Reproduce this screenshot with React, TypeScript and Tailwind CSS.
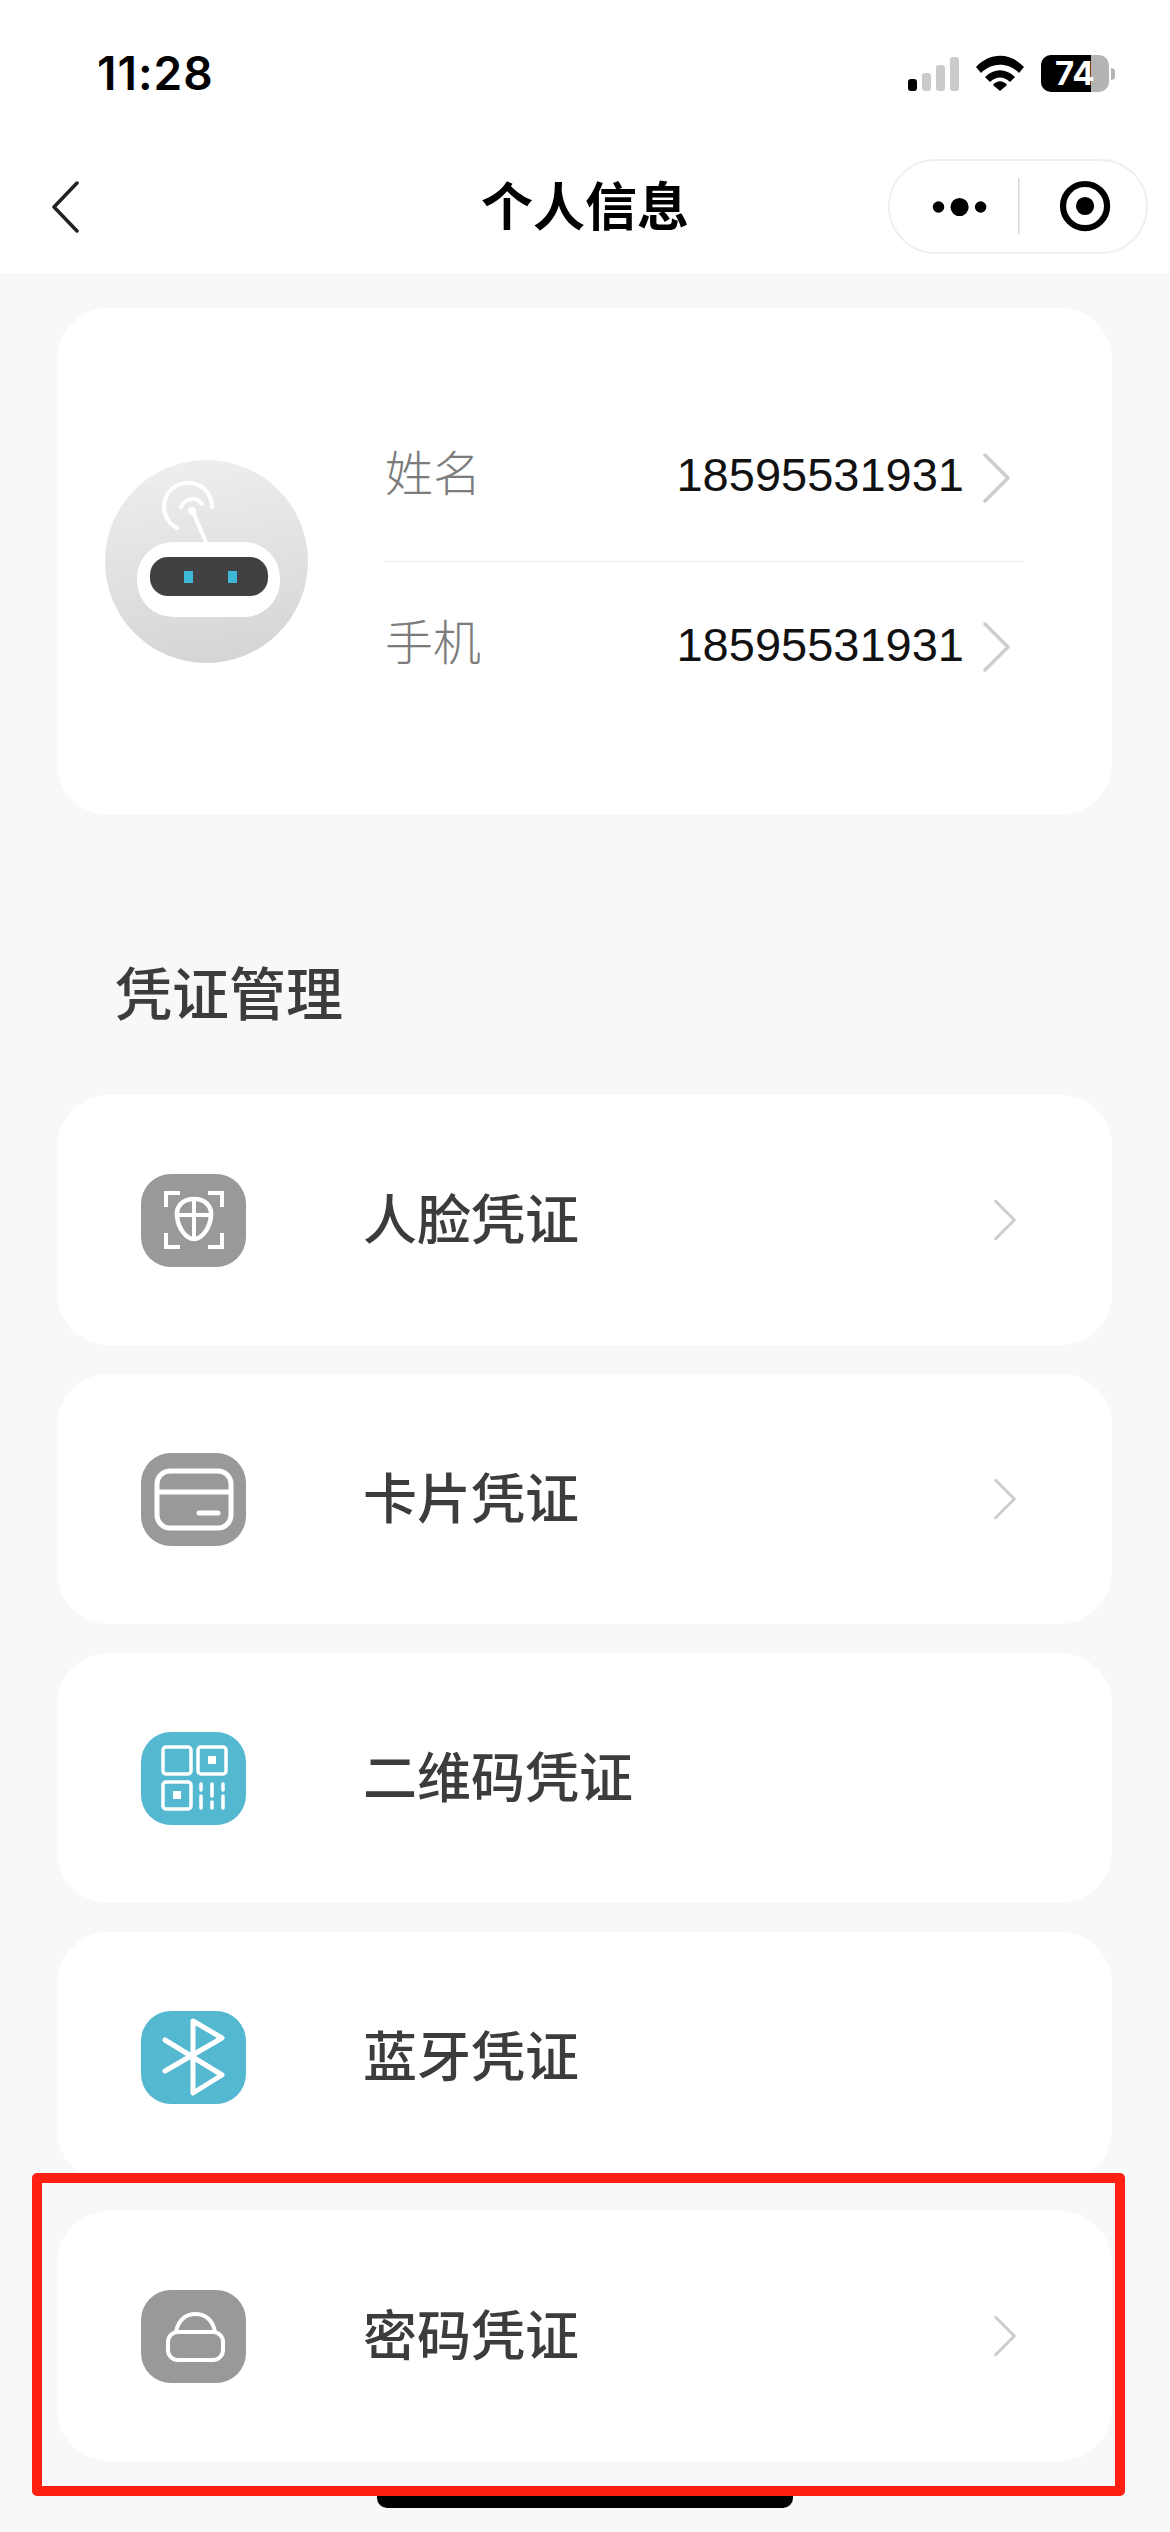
function Chevron({ className }: { className: string }) {
  return (
    <svg viewBox="0 0 27 50" fill="none" className={className}>
      <path d="M2 2 L25 25 L2 48" stroke="#cdcdcd" strokeWidth="3.5" strokeLinecap="round" strokeLinejoin="round" />
    </svg>
  );
}

function Tile({ color, children }: { color: string; children: React.ReactNode }) {
  return (
    <div className={`w-[105px] h-[93px] rounded-[30px] shrink-0 ${color}`}>
      <svg viewBox="0 0 105 93" fill="none" stroke="#fff" className="w-full h-full">
        {children}
      </svg>
    </div>
  );
}

function FaceIcon() {
  return (
    <Tile color="bg-[#999999]">
      <g strokeWidth="4">
        <path d="M39 19 H25 V33 M67 19 H81 V33 M25 59 V73 H39 M81 59 V73 H67" />
        <path d="M53 25 C65 25 71 33 70 42 C69 54 61 65 53 65 C45 65 37 54 36 42 C35 33 41 25 53 25 Z" strokeWidth="4.5" />
        <path d="M53 25 V65 M37 41 H69" />
      </g>
    </Tile>
  );
}

function CardIcon() {
  return (
    <Tile color="bg-[#999999]">
      <rect x="16" y="18" width="74" height="57" rx="13" strokeWidth="5" />
      <path d="M16 39 H90" strokeWidth="5" />
      <path d="M58 60 H77" strokeWidth="5" strokeLinecap="round" />
    </Tile>
  );
}

function QrIcon() {
  return (
    <Tile color="bg-[#54b8d1]">
      <g strokeWidth="3.5">
        <rect x="22" y="15" width="28" height="27" rx="3" />
        <rect x="57" y="15" width="28" height="27" rx="3" />
        <rect x="22" y="50" width="28" height="27" rx="3" />
      </g>
      <rect x="67" y="24" width="8" height="8" fill="#fff" stroke="none" />
      <rect x="32" y="59" width="8" height="8" fill="#fff" stroke="none" />
      <path d="M60 52 V58 M60 64 V76 M71 52 V64 M71 70 V76 M82 52 V58 M82 64 V76" strokeWidth="3.5" strokeLinecap="round" />
    </Tile>
  );
}

function BluetoothIcon() {
  return (
    <Tile color="bg-[#54b8d1]">
      <path d="M24 29 L81 64 L52 82 V10 L81 27 L24 60" strokeWidth="5" strokeLinecap="round" strokeLinejoin="round" />
    </Tile>
  );
}

function LockIcon() {
  return (
    <Tile color="bg-[#999999]">
      <rect x="27" y="42" width="55" height="28" rx="10" strokeWidth="4" />
      <path d="M35 42 C37 30 45 24 54.5 24 C64 24 72 30 74 42" strokeWidth="4" />
    </Tile>
  );
}

function Avatar() {
  return (
    <svg viewBox="0 0 203 203" className="w-[203px] h-[203px] shrink-0 mt-[152px]">
      <defs>
        <linearGradient id="avatarBg" x1="0.4" y1="0" x2="0.55" y2="1">
          <stop offset="0" stopColor="#eeeeee" />
          <stop offset="1" stopColor="#d4d5d5" />
        </linearGradient>
      </defs>
      <circle cx="101.5" cy="101.5" r="101.5" fill="url(#avatarBg)" />
      <path d="M88 52 L101 82" stroke="#fff" strokeWidth="4" strokeLinecap="round" />
      <circle cx="87" cy="51" r="4" fill="#fff" />
      <path d="M72 68 A24 24 0 1 1 107 47" stroke="#fff" strokeWidth="4" fill="none" strokeLinecap="round" />
      <path d="M76 47 A12 12 0 0 1 97 44" stroke="#fff" strokeWidth="4" fill="none" strokeLinecap="round" />
      <rect x="32" y="82" width="143" height="75" rx="36" fill="#fff" />
      <rect x="45" y="97" width="118" height="39" rx="18" fill="#414143" />
      <rect x="79" y="111" width="9" height="12" fill="#3fb8d8" />
      <rect x="123" y="111" width="9" height="12" fill="#3fb8d8" />
    </svg>
  );
}

function InfoRow({ label, value, className }: { label: string; value: string; className: string }) {
  return (
    <div className={`flex items-center justify-between pl-[1px] pr-[16px] ${className}`}>
      <span className="text-[48px] leading-none font-light text-[#7c7c7c]">{label}</span>
      <div className="flex items-center gap-[19px]">
        <span className="text-[47px] leading-none text-[#111111]">{value}</span>
        <Chevron className="w-[27px] h-[50px] mt-[6px]" />
      </div>
    </div>
  );
}

function CredentialCard({ icon, title, arrow }: { icon: React.ReactNode; title: string; arrow?: boolean }) {
  return (
    <div className="h-[250px] rounded-[52px] bg-white flex items-center pl-[84px] pr-[96px]">
      {icon}
      <span className="ml-[117px] mt-[2px] flex-1 text-[54px] leading-none font-medium text-[#3c3c3c]">{title}</span>
      {arrow && <Chevron className="w-[22px] h-[48px]" />}
    </div>
  );
}

export default function App() {
  return (
    <div className="relative w-[1170px] h-[2532px] overflow-hidden bg-[#f6f8fa] font-['Liberation_Sans','Noto_Sans_CJK_SC',sans-serif]">
      <header className="h-[273px] bg-white">
        <div className="h-[159px] flex items-start justify-between pt-[50px] pl-[97px] pr-[55px]">
          <span className="font-['Inter',sans-serif] text-[46px] leading-[46px] font-semibold text-black tracking-[1px]">11:28</span>
          <div className="flex items-start gap-[17px] pt-[5px]">
            <svg viewBox="0 0 51 34" className="w-[51px] h-[34px] mt-[2px]">
              <rect x="0" y="22" width="9" height="12" rx="3" fill="#000" />
              <rect x="14" y="16" width="9" height="18" rx="3" fill="#cbcbcb" />
              <rect x="28" y="8" width="9" height="26" rx="3" fill="#cbcbcb" />
              <rect x="42" y="0" width="9" height="34" rx="3" fill="#cbcbcb" />
            </svg>
            <svg viewBox="0 0 48 36" className="w-[48px] h-[36px]">
              <path d="M0 12 C14 -3 34 -3 48 12 L43 18 C32 7 16 7 5 18 Z" fill="#000" />
              <path d="M9 22 C18 13 30 13 39 22 L34 27 C28 21 20 21 14 27 Z" fill="#000" />
              <path d="M17 30 C21 25 27 25 31 30 L24 36 Z" fill="#000" />
            </svg>
            <div className="flex items-center gap-[2px]">
              <div className="relative w-[68px] h-[37px] rounded-[10px] bg-[#b4b4b4]">
                <div className="h-full w-[50px] rounded-l-[10px] bg-black" />
                <span className="absolute left-[14px] top-[2px] font-['Inter',sans-serif] text-[33px] leading-[33px] font-bold text-white">74</span>
              </div>
              <div className="w-[4px] h-[12px] rounded-r-full bg-[#b4b4b4]" />
            </div>
          </div>
        </div>
        <div className="h-[95px] grid grid-cols-[1fr_auto_1fr] items-center px-[22px]">
          <svg viewBox="0 0 28 52" fill="none" className="w-[28px] h-[52px] ml-[29px]">
            <path d="M26 2 L3 26 L26 50" stroke="#222222" strokeWidth="3.5" strokeLinecap="round" strokeLinejoin="round" />
          </svg>
          <h1 className="mt-[3px] text-[52px] leading-none font-bold text-black">个人信息</h1>
          <div className="justify-self-end w-[260px] h-[95px] rounded-full border-2 border-[#efefef] flex items-center">
            <svg viewBox="0 0 260 95" className="w-[256px] h-[91px]">
              <circle cx="47" cy="48" r="6" fill="#000" />
              <circle cx="69" cy="48" r="9.5" fill="#000" />
              <circle cx="91" cy="48" r="6" fill="#000" />
              <rect x="130" y="18" width="1.5" height="59" fill="#d5d5d5" />
              <circle cx="200" cy="47" r="23" fill="none" stroke="#000" strokeWidth="6.5" />
              <circle cx="200" cy="47" r="9.5" fill="#000" />
            </svg>
          </div>
        </div>
      </header>

      <main className="pt-[35px] pl-[57px] w-[1112px]">
        <section className="h-[507px] rounded-[52px] bg-white flex items-start pl-[48px]">
          <Avatar />
          <div className="w-[642px] ml-[76px] pt-[80px]">
            <InfoRow label="姓名" value="18595531931" className="h-[174px] border-b border-[#eeeeee]" />
            <InfoRow label="手机" value="18595531931" className="h-[164px]" />
          </div>
        </section>

        <h2 className="h-[280px] pt-[152px] pl-[58px] text-[57px] leading-none font-medium text-[#3c3c3c]">凭证管理</h2>

        <div className="flex flex-col gap-[29px]">
          <CredentialCard icon={<FaceIcon />} title="人脸凭证" arrow />
          <CredentialCard icon={<CardIcon />} title="卡片凭证" arrow />
          <CredentialCard icon={<QrIcon />} title="二维码凭证" />
          <CredentialCard icon={<BluetoothIcon />} title="蓝牙凭证" />
          <CredentialCard icon={<LockIcon />} title="密码凭证" arrow />
        </div>
      </main>

      <div className="absolute left-[377px] top-[2490px] w-[416px] h-[18px] rounded-b-[10px] bg-black" />
      <div className="absolute left-[32px] top-[2173px] w-[1093px] h-[323px] rounded-[5px] border-[10px] border-[#ff2014]" />
    </div>
  );
}
